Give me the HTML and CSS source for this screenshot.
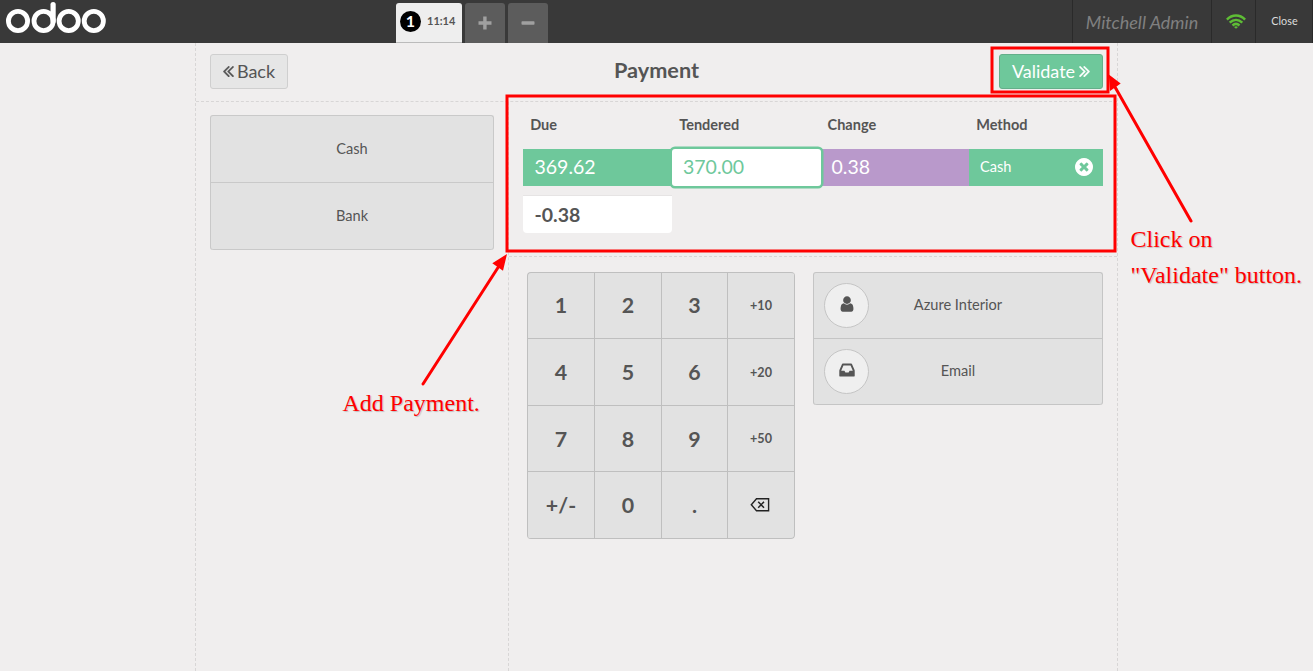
FILE: index.html
```html
<!DOCTYPE html>
<html lang="en">
<head>
<meta charset="utf-8">
<title>Payment</title>
<link rel="stylesheet" href="styles.css">
</head>
<body>
<div class="pos">
  <header class="topbar">
    <svg class="logo" width="108" height="36" viewBox="0 0 108 36" fill="none" stroke="#fff" stroke-width="4.8">
      <circle cx="18" cy="21" r="9.6"/><circle cx="43.6" cy="21" r="9.6"/>
      <circle cx="68.7" cy="21" r="9.6"/><circle cx="93.8" cy="21" r="9.6"/>
      <path d="M53.1 4.6V21" stroke-width="5.2" stroke-linecap="round"/>
    </svg>
    <nav class="tabs">
      <div class="tab active"><span class="seq">1</span><span class="time">11:14</span></div>
      <div class="tab"><svg width="14" height="14" viewBox="0 0 14 14"><path d="M5.200.5h3.400v4.800h4.900v3.400H8.600v4.800H5.200V8.700H.5V5.300h4.700z" fill="#a0a0a0"/></svg></div>
      <div class="tab"><svg width="14" height="14" viewBox="0 0 14 14"><rect x=".5" y="5.300" width="13" height="3.400" rx=".8" fill="#a0a0a0"/></svg></div>
    </nav>
    <div class="status">
      <div class="user">Mitchell Admin</div>
      <div class="wifi"><svg width="20" height="15" viewBox="0 0 20 15" fill="none" stroke="#5ebd35" stroke-width="2.500">
        <path d="M.9 5.600C6.200.2 13.800.2 19.100 5.600"/><path d="M3.700 8.700C7.500 5.100 12.500 5.100 16.300 8.700"/><path d="M6.500 11.500C8.700 9.500 11.300 9.500 13.500 11.500"/><path d="M10 14.800 8 12.900Q10 11.500 12 12.900z" fill="#5ebd35" stroke="none"/></svg></div>
      <div class="close">Close</div>
    </div>
  </header>

  <main class="screen">
    <div class="heading">
      <button class="button back"><svg width="11" height="11" viewBox="429 451 966 1008"><path fill="currentColor" stroke="currentColor" stroke-width="30" d="M1011 1376q0 13-10 23l-50 50q-10 10-23 10t-23-10l-466-466q-10-10-10-23t10-23l466-466q10-10 23-10t23 10l50 50q10 10 10 23t-10 23l-393 393 393 393q10 10 10 23zm384 0q0 13-10 23l-50 50q-10 10-23 10t-23-10l-466-466q-10-10-10-23t10-23l466-466q10-10 23-10t23 10l50 50q10 10 10 23t-10 23l-393 393 393 393q10 10 10 23z"/></svg><span>Back</span></button>
      <h1>Payment</h1>
      <button class="button next"><span>Validate</span><svg class="flip" width="11" height="11" viewBox="429 451 966 1008"><path fill="currentColor" stroke="currentColor" stroke-width="30" d="M1011 1376q0 13-10 23l-50 50q-10 10-23 10t-23-10l-466-466q-10-10-10-23t10-23l466-466q10-10 23-10t23 10l50 50q10 10 10 23t-10 23l-393 393 393 393q10 10 10 23zm384 0q0 13-10 23l-50 50q-10 10-23 10t-23-10l-466-466q-10-10-10-23t10-23l466-466q10-10 23-10t23 10l50 50q10 10 10 23t-10 23l-393 393 393 393q10 10 10 23z"/></svg></button>
    </div>
    <div class="columns">
      <aside class="methods">
        <div class="list">
          <div class="method">Cash</div>
          <div class="method">Bank</div>
        </div>
      </aside>
      <section class="content">
        <div class="lines">
          <div class="row labels"><span>Due</span><span>Tendered</span><span>Change</span><span>Method</span></div>
          <div class="row line">
            <div class="due">369.62</div>
            <div class="tendered">370.00</div>
            <div class="change">0.38</div>
            <div class="name"><span>Cash</span><svg width="18" height="18" viewBox="128 128 1536 1536"><path fill="#fff" d="M1277 1122q0-26-19-45l-181-181 181-181q19-19 19-45 0-27-19-46l-90-90q-19-19-46-19-26 0-45 19l-181 181-181-181q-19-19-45-19-27 0-46 19l-90 90q-19 19-19 46 0 26 19 45l181 181-181 181q-19 19-19 45 0 27 19 46l90 90q19 19 46 19 26 0 45-19l181-181 181 181q19 19 45 19 27 0 46-19l90-90q19-19 19-46zm387-226q0 209-103 385.500t-279.500 279.500-385.500 103-385.500-103-279.500-279.500-103-385.500 103-385.500 279.500-279.500 385.500-103 385.500 103 279.500 279.500 103 385.500z"/></svg></div>
          </div>
          <div class="remaining">-0.38</div>
        </div>
        <div class="controls">
          <div class="numpad">
            <button class="digit">1</button><button class="digit">2</button><button class="digit">3</button><button class="mode">+10</button>
            <button>4</button><button>5</button><button>6</button><button class="mode second">+20</button>
            <button>7</button><button>8</button><button>9</button><button class="mode">+50</button>
            <button>+/-</button><button>0</button><button>.</button>
            <button class="backspace"><svg width="20" height="14" viewBox="0 0 20 14" fill="none" stroke="#222"><path d="M6.500.8H18.600V12.700H6.500L1.300 6.750z" stroke-width="1.400"/><path d="M8.200 3.700 14 9.800M14 3.700 8.200 9.800" stroke-width="1.500"/></svg></button>
          </div>
          <div class="options">
            <div class="option"><span class="disc"><svg width="18" height="18" viewBox="0 0 1792 1792"><path fill="#555" d="M1536 1399q0 109-62.500 187t-150.500 78h-854q-88 0-150.500-78t-62.500-187q0-85 8.500-160.500t31.500-152 58.500-131 94-89 134.500-34.500q131 128 313 128t313-128q76 0 134.500 34.500t94 89 58.500 131 31.500 152 8.500 160.500zm-256-887q0 159-112.500 271.500t-271.500 112.500-271.500-112.500-112.500-271.500 112.500-271.500 271.500-112.500 271.500 112.500 112.500 271.500z"/></svg></span><span class="label">Azure Interior</span></div>
            <div class="option"><span class="disc"><svg width="18" height="18" viewBox="0 0 1792 1792"><path fill="#555" d="M1151 960h316q-1-3-2.500-8t-2.500-8l-212-496h-708l-212 496q-1 2-2.500 8t-2.500 8h316l95 192h320zm513 30v482q0 26-19 45t-45 19h-1408q-26 0-45-19t-19-45v-482q0-62 25-123l238-552q10-25 36.500-42t52.500-17h832q26 0 52.500 17t36.500 42l238 552q25 61 25 123z"/></svg></span><span class="label">Email</span></div>
          </div>
        </div>
      </section>
    </div>
  </main>

  <div class="notes">
    <svg width="1313" height="671" viewBox="0 0 1313 671" fill="none" stroke="#f00" stroke-width="3">
      <rect x="992" y="48" width="116" height="44"/>
      <rect x="507" y="96" width="608" height="155"/>
      <path d="M423 384 499 266M1191 221 1115 87" stroke-linecap="round"/>
      <path d="M507 254 492.300 263.300 503 270.700zM1108.800 74.500 1120.700 83.500 1110 91z" fill="#f00" stroke="none"/>
    </svg>
    <p class="note add">Add Payment.</p>
    <p class="note validate">Click on<br>"Validate" button.</p>
  </div>
</div>
</body>
</html>
```
FILE: styles.css
```css
* { box-sizing: border-box; }
body { margin: 0; overflow: hidden; }
button { font: inherit; color: inherit; margin: 0; padding: 0; border: 0; background: none; }
svg { display: block; flex: none; }

.pos {
  position: relative;
  display: flex;
  flex-direction: column;
  height: 671px;
  background: #f0eeee;
  color: #555;
  font-family: Lato, sans-serif;
  font-size: 14.6px;
}

/* Top bar */
.topbar { display: flex; height: 43px; background: #393939; }
.logo { margin-right: 288px; }
.tabs { display: flex; gap: 3px; padding-top: 3px; }
.tab {
  display: flex;
  align-items: center;
  justify-content: center;
  width: 40px;
  border-radius: 3px 3px 0 0;
  background: #5c5c5c;
}
.tab.active {
  width: 66px;
  justify-content: flex-start;
  padding: 0 0 2px 4px;
  gap: 6px;
  background: #eee;
  border-bottom: 1px solid #bbb;
}
.seq {
  width: 21px;
  height: 21px;
  border-radius: 50%;
  background: #000;
  color: #fff;
  font-size: 16px;
  font-weight: 700;
  line-height: 20px;
  text-align: center;
}
.time { padding-bottom: 2px; font-size: 11px; font-weight: 700; }
.status { display: flex; margin-left: auto; border-right: 1px solid #2a2a2a; }
.status > div { display: flex; align-items: center; justify-content: center; border-left: 1px solid #2a2a2a; }
.user { width: 139px; color: #808080; font-size: 18px; font-style: italic; }
.status .wifi { width: 44px; padding: 0 0 0 5px; }
.close { width: 57px; padding: 0 0 2px 1px; color: #ddd; font-size: 10.8px; }

/* Payment screen */
.screen {
  display: flex;
  flex: 1;
  flex-direction: column;
  width: 923px;
  margin-left: 195px;
  border: dashed #d8d6d6;
  border-width: 0 1px;
}
.heading {
  display: flex;
  align-items: flex-start;
  justify-content: space-between;
  height: 59px;
  padding: 11px 14px 0;
  border-bottom: 1px dashed #d8d6d6;
}
.heading h1 { width: 120px; margin: 0 0 0 26px; font-size: 21.7px; font-weight: 700; line-height: 32px; text-align: center; }
.button {
  display: flex;
  align-items: center;
  justify-content: center;
  gap: 3px;
  height: 35px;
  border: 1px solid #cfcfcf;
  border-radius: 3px;
  background: #e6e6e6;
  font-size: 18px;
}
.button span { padding-bottom: 2px; }
.back { width: 78px; }
.next { width: 104px; gap: 4px; border-color: #64af8a; background: #6ec89b; color: #fff; }
.flip { transform: scaleX(-1); }

.columns { display: flex; flex: 1; }
.methods { width: 313px; padding: 13px 14px; border-right: 1px dashed #d8d6d6; }
.list { border: solid #c9c9c9; border-width: 1px 1px 0; border-radius: 3px; background: #e2e2e2; }
.method {
  height: 67px;
  border-bottom: 1px solid #c9c9c9;
  line-height: 66px;
  text-align: center;
}
.method:last-child { border-radius: 0 0 3px 3px; }

.content { flex: 1; }
.lines { height: 155px; padding: 12px 14px 0; border-bottom: 1px dashed #d8d6d6; }
.row { display: grid; grid-template-columns: 149px 149px 148px 134px; }
.labels { height: 35px; font-size: 14.5px; font-weight: 700; line-height: 22px; }
.labels span { padding-left: 7.2px; }
.labels span:nth-child(3) { padding-left: 6.6px; }
.line { height: 37px; color: #fff; font-size: 19.5px; line-height: 35px; }
.due { padding-left: 11.5px; background: #6ec89b; }
.tendered {
  z-index: 1;
  padding-left: 11px;
  border-radius: 3px;
  background: #fff;
  box-shadow: 0 0 0 2.5px #6ec89b;
  color: #6ec89b;
}
.change { padding-left: 10.5px; background: #b999cb; }
.name {
  display: flex;
  align-items: center;
  justify-content: space-between;
  padding: 0 10px 0 11px;
  background: #6ec89b;
  font-size: 14.6px;
}
.name span { padding-bottom: 2px; }
.name svg { margin-bottom: 1px; }
.remaining {
  width: 149px;
  height: 38px;
  margin-top: 9px;
  padding-left: 11.5px;
  border-top: 1px solid #e6e4e4;
  border-radius: 0 0 4px 4px;
  background: #fff;
  font-size: 19.5px;
  font-weight: 700;
  line-height: 38px;
}

.controls { display: flex; align-items: flex-start; gap: 18px; padding: 15px 14px 0 18px; }
.numpad {
  display: grid;
  grid-template-columns: 67px 67px 66px 67px;
  grid-template-rows: 66px 67px 66px 67px;
  overflow: hidden;
  border: solid #bfbfbf;
  border-width: 1px 0 0 1px;
  border-radius: 4px;
  background: #e2e2e2;
}
.numpad button {
  display: flex;
  align-items: center;
  justify-content: center;
  border: solid #bfbfbf;
  border-width: 0 1px 1px 0;
  font-size: 21.4px;
  font-weight: 700;
}
.numpad button:last-child { border-radius: 0 0 4px 0; }
.numpad .digit { padding-bottom: 1px; }
.numpad .mode { padding-bottom: 1px; font-size: 12.6px; }
.numpad .second { padding-bottom: 0; }
.numpad .backspace { padding: 0 2px 1px 0; }
.options { flex: 1; border: solid #c5c5c5; border-width: 1px 1px 0; border-radius: 3px; background: #e2e2e2; }
.option {
  display: grid;
  grid-template-columns: 45px 1fr 45px;
  align-items: center;
  height: 66px;
  padding: 0 10px;
  border-bottom: 1px solid #c5c5c5;
  text-align: center;
}
.option:last-child { border-radius: 0 0 3px 3px; }
.option .label { padding-bottom: 3px; }
.disc {
  display: flex;
  align-items: center;
  justify-content: center;
  height: 45px;
  padding-bottom: 3px;
  border: 1px solid #c5c5c5;
  border-radius: 50%;
  background: #efefef;
}

/* Annotations drawn over the screen */
.notes { position: absolute; inset: 0; pointer-events: none; }
.note {
  position: absolute;
  margin: 0;
  color: #f00;
  font-family: "Liberation Serif", serif;
  font-size: 24px;
  line-height: 36px;
  white-space: nowrap;
  text-shadow: 1px 1px 1px rgba(0, 0, 0, .2);
}
.add { left: 342.5px; top: 385px; }
.validate { left: 1130.5px; top: 221px; }
```
